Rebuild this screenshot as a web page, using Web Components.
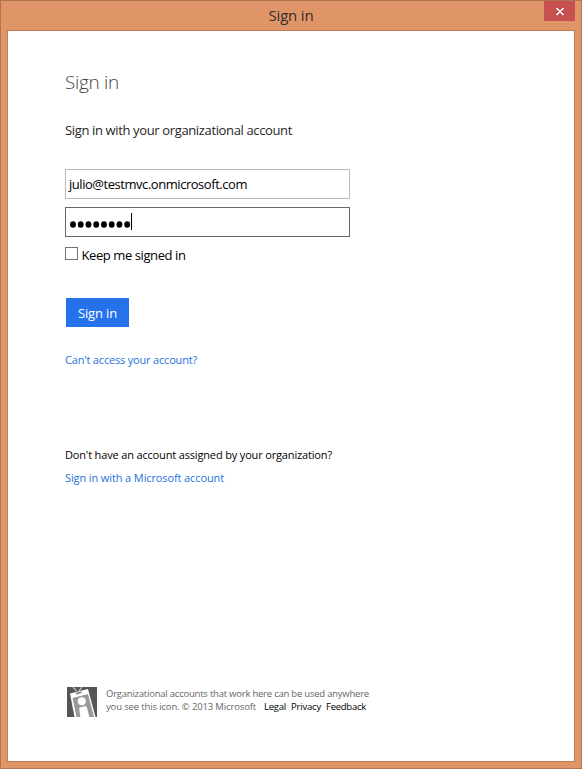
<!DOCTYPE html>
<html lang="en"><head><meta charset="utf-8"><title>Sign in</title>
<style>html,body{margin:0;height:100%;overflow:hidden;background:#fff}</style></head>
<body>
<dialog-window>
  <fit-text slot="title" width="45">Sign in</fit-text>
  <sign-in-form></sign-in-form>
  <account-footer slot="footer"></account-footer>
</dialog-window>
<script>
// Inline text whose letter spacing is adjusted so that it fills its width attribute.
class FitText extends HTMLElement {
  connectedCallback() {
    if (this.shadowRoot) return;
    this.attachShadow({mode:'open'}).innerHTML =
      '<style>:host{display:inline-block;white-space:pre}</style><slot></slot>';
    const n = () => this.textContent.length;
    const fit = () => {
      const target = +this.getAttribute('width');
      this.style.letterSpacing = '0px';
      this.style.width = 'auto';
      const w = this.getBoundingClientRect().width;
      if (w && target) {
        this.style.letterSpacing = ((target - w) / n()).toFixed(3) + 'px';
        this.style.width = target + 'px';
      }
    };
    fit();
    addEventListener('load', fit);
  }
}

class DialogWindow extends HTMLElement {
  constructor() {
    super();
    this.attachShadow({mode:'open'}).innerHTML = `<style>
:host{display:flex;flex-direction:column;box-sizing:border-box;width:582px;height:769px;background:#e09568;border:1px solid #b07450;padding:0 6px 6px;font-family:"Open Sans","Noto Sans",sans-serif;font-size:13px;line-height:20px;color:#000}
header{display:grid;grid-template-columns:31px 1fr 31px;height:29px;flex:none;color:#332c28;font-size:15px;line-height:29px;text-align:center}
.close{height:20px;background:#c75050;display:flex;align-items:center;justify-content:center}
main{flex:1;display:flex;flex-direction:column;justify-content:space-between;background:#fff;border:1px solid #c47c53;padding:39px 57px 44px}
</style><header><span></span><div><slot name="title"></slot></div><div class="close"><svg width="8" height="7" viewBox="0 0 8 7" shape-rendering="crispEdges" fill="#fff"><path d="M0 0h2v1h1v1h2V1h1V0h2v1H7v1H6v1H5v1h1v1h1v1h1v1H6V6H5V5H3v1H2v1H0V6h1V5h1V4h1V3H2V2H1V1H0z"/></svg></div></header>
<main><slot></slot><slot name="footer"></slot></main>`;
  }
}

class TextField extends HTMLElement {
  constructor() {
    super();
    this.attachShadow({mode:'open'}).innerHTML = `<style>
:host{display:flex;align-items:center;box-sizing:border-box;width:285px;height:30px;border:1px solid #bababa;padding-left:3px}
:host([focused]){border-color:#666}
</style><slot></slot>`;
  }
}

class PasswordDots extends HTMLElement {
  constructor() {
    super();
    this.attachShadow({mode:'open'}).innerHTML = `<style>
:host{display:flex;align-items:center}
svg{margin-top:4px}
i{width:1px;height:17px;background:#000;margin-top:-1px}
</style><svg width="62" height="7">${Array.from({length:8},(_,k)=>`<ellipse cx="${(4+k*7.74).toFixed(2)}" cy="3.5" rx="2.9" ry="3.2"/>`).join('')}</svg><i></i>`;
  }
}

class CheckBox extends HTMLElement {
  constructor() {
    super();
    this.attachShadow({mode:'open'}).innerHTML = `<style>
:host{display:flex;height:20px;gap:3.5px}
b{box-sizing:border-box;width:13px;height:13px;border:1px solid #707070;margin-top:2px}
</style><b></b><slot></slot>`;
  }
}

class PushButton extends HTMLElement {
  constructor() {
    super();
    this.attachShadow({mode:'open'}).innerHTML = `<style>
:host{display:block;box-sizing:border-box;width:63px;height:29px;padding-left:12px;background:#2672ec;color:#fff;line-height:30px}
</style><slot></slot>`;
  }
}

class SignInForm extends HTMLElement {
  constructor() {
    super();
    this.attachShadow({mode:'open'}).innerHTML = `<style>
:host{display:flex;flex-direction:column;align-items:flex-start}
h1{margin:0 0 26px;height:24px;font-size:19px;font-weight:300;line-height:24px;color:#444}
p{margin:0;height:20px;color:#262626}
.fields{display:grid;gap:8px;margin:29px 0 8px}
push-button{margin:33px 0 25px 1px}
.small{font-size:11px;line-height:16px;height:16px}
.link{color:#2672dc}
.other{display:grid;gap:7px;margin-top:79px}
</style>
<h1><fit-text width="54">Sign in</fit-text></h1>
<p><fit-text width="227">Sign in with your organizational account</fit-text></p>
<div class="fields">
<text-field><fit-text width="178">julio@testmvc.onmicrosoft.com</fit-text></text-field>
<text-field focused><password-dots></password-dots></text-field></div>
<check-box><fit-text width="104">Keep me signed in</fit-text></check-box>
<push-button><fit-text width="39">Sign in</fit-text></push-button>
<div class="small link"><fit-text width="132">Can't access your account?</fit-text></div>
<div class="other"><div class="small"><fit-text width="267">Don't have an account assigned by your organization?</fit-text></div>
<div class="small link"><fit-text width="159">Sign in with a Microsoft account</fit-text></div></div>`;
  }
}

class BadgeIcon extends HTMLElement {
  constructor() {
    super();
    this.attachShadow({mode:'open'}).innerHTML = `<style>:host,svg{display:block}</style>
<svg width="30" height="30" viewBox="0 0 30 30"><path fill="#555" d="M0 0h30v30H0z"/>
<path d="M3 6.500L21 2 28.500 30H7.500z" fill="#fff"/>
<path d="M5.500 11L21 7l6 23H9.500z" fill="#999"/>
<path d="M13.300 30L12.300 22Q12.200 20.500 13.500 20.200L18 19.200Q19.500 19 20 20.500L22.300 30z" fill="#fff"/>
<circle cx="14.800" cy="14.300" r="4" fill="#fff"/>
<path d="M6 0l3.500 4M15 0l-3 4" stroke="#bbb" stroke-width="1.300" fill="none"/>
<path d="M9 6.800l5.500-1.500" stroke="#777" stroke-width="1.500"/></svg>`;
  }
}

class AccountFooter extends HTMLElement {
  constructor() {
    super();
    this.attachShadow({mode:'open'}).innerHTML = `<style>
:host{display:flex;gap:9px;height:30px;padding-left:2px;font-size:9.5px;line-height:13px;color:#666}
.row{display:flex;height:13px;gap:5px}
.row fit-text:first-child{margin-right:3px}
.row fit-text+fit-text{color:#000}
</style><badge-icon></badge-icon><div>
<div class="row"><fit-text width="263">Organizational accounts that work here can be used anywhere</fit-text></div>
<div class="row"><fit-text width="150">you see this icon. © 2013 Microsoft</fit-text><fit-text width="22">Legal</fit-text><fit-text width="30">Privacy</fit-text><fit-text width="40">Feedback</fit-text></div></div>`;
  }
}
customElements.define('dialog-window', DialogWindow);
customElements.define('text-field', TextField);
customElements.define('password-dots', PasswordDots);
customElements.define('check-box', CheckBox);
customElements.define('push-button', PushButton);
customElements.define('sign-in-form', SignInForm);
customElements.define('badge-icon', BadgeIcon);
customElements.define('account-footer', AccountFooter);
customElements.define('fit-text', FitText);
</script></body></html>
